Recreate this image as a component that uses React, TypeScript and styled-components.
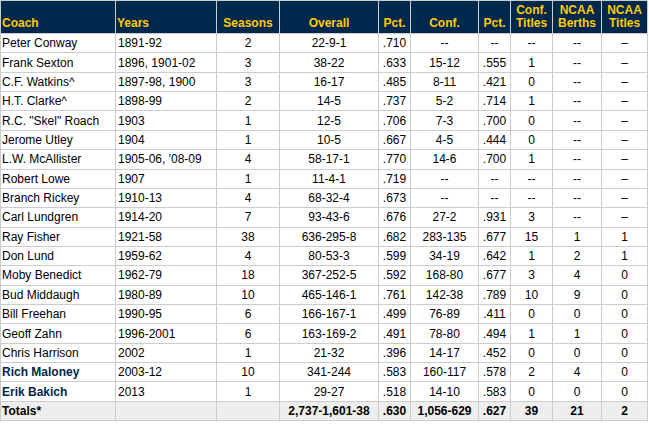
import React from "react";
import styled, { createGlobalStyle } from "styled-components";

const Global = createGlobalStyle`
  html, body { margin: 0; padding: 0; background: #fff; }
  body { font-family: "Liberation Sans", Arial, sans-serif; }
`;

const Table = styled.table`
  table-layout: fixed;
  width: 647px;
  border-collapse: collapse;
  font-family: "Liberation Sans", Arial, sans-serif;
  font-size: 12px;
  color: #000;
  border: 1px solid #ccc;
`;

const HeadCell = styled.th<{ $left?: boolean }>`
  background: #00274c;
  color: #ffcb05;
  font-weight: bold;
  font-size: 12px;
  line-height: 13px;
  text-align: ${(p) => (p.$left ? "left" : "center")};
  vertical-align: bottom;
  padding: 0 1px 3px 1px;
  border: 1px solid #ccc;
  height: 29px;
`;

const Row = styled.tr<{ $total?: boolean }>`
  height: ${(p) => (p.$total ? "19px" : "19.37px")};
  background: ${(p) => (p.$total ? "#eeeeee" : "#fff")};
  font-weight: ${(p) => (p.$total ? "bold" : "normal")};
`;

const Cell = styled.td<{ $left?: boolean; $pad?: number }>`
  border: 1px solid #ccc;
  padding: 0 1px 0 ${(p) => (p.$pad ?? 1)}px;
  text-align: ${(p) => (p.$left ? "left" : "center")};
  vertical-align: middle;
  white-space: nowrap;
  overflow: hidden;
  line-height: 14px;
`;

const CoachLink = styled.span`
  color: #00274c;
  font-weight: bold;
`;

type R = [string, string, string, string, string, string, string, string, string, string, boolean?];

const D = "--";
const T = "–";

const rows: R[] = [
  ["Peter Conway", "1891-92", "2", "22-9-1", ".710", D, D, D, D, T],
  ["Frank Sexton", "1896, 1901-02", "3", "38-22", ".633", "15-12", ".555", "1", D, T],
  ["C.F. Watkins^", "1897-98, 1900", "3", "16-17", ".485", "8-11", ".421", "0", D, T],
  ["H.T. Clarke^", "1898-99", "2", "14-5", ".737", "5-2", ".714", "1", D, T],
  ["R.C. \"Skel\" Roach", "1903", "1", "12-5", ".706", "7-3", ".700", "0", D, T],
  ["Jerome Utley", "1904", "1", "10-5", ".667", "4-5", ".444", "0", D, T],
  ["L.W. McAllister", "1905-06, '08-09", "4", "58-17-1", ".770", "14-6", ".700", "1", D, T],
  ["Robert Lowe", "1907", "1", "11-4-1", ".719", D, D, D, D, T],
  ["Branch Rickey", "1910-13", "4", "68-32-4", ".673", D, D, D, D, T],
  ["Carl Lundgren", "1914-20", "7", "93-43-6", ".676", "27-2", ".931", "3", D, T],
  ["Ray Fisher", "1921-58", "38", "636-295-8", ".682", "283-135", ".677", "15", "1", "1"],
  ["Don Lund", "1959-62", "4", "80-53-3", ".599", "34-19", ".642", "1", "2", "1"],
  ["Moby Benedict", "1962-79", "18", "367-252-5", ".592", "168-80", ".677", "3", "4", "0"],
  ["Bud Middaugh", "1980-89", "10", "465-146-1", ".761", "142-38", ".789", "10", "9", "0"],
  ["Bill Freehan", "1990-95", "6", "166-167-1", ".499", "76-89", ".411", "0", "0", "0"],
  ["Geoff Zahn", "1996-2001", "6", "163-169-2", ".491", "78-80", ".494", "1", "1", "0"],
  ["Chris Harrison", "2002", "1", "21-32", ".396", "14-17", ".452", "0", "0", "0"],
  ["Rich Maloney", "2003-12", "10", "341-244", ".583", "160-117", ".578", "2", "4", "0", true],
  ["Erik Bakich", "2013", "1", "29-27", ".518", "14-10", ".583", "0", "0", "0", true],
];

const widths = [115, 101, 63, 99, 32, 68, 32, 42, 49, 46];

export default function App() {
  return (
    <>
      <Global />
      <Table>
        <colgroup>
          {widths.map((w, i) => (
            <col key={i} style={{ width: w }} />
          ))}
        </colgroup>
        <thead>
          <tr>
            <HeadCell $left>Coach</HeadCell>
            <HeadCell $left>Years</HeadCell>
            <HeadCell>Seasons</HeadCell>
            <HeadCell>Overall</HeadCell>
            <HeadCell>Pct.</HeadCell>
            <HeadCell>Conf.</HeadCell>
            <HeadCell>Pct.</HeadCell>
            <HeadCell>Conf.<br />Titles</HeadCell>
            <HeadCell>NCAA<br />Berths</HeadCell>
            <HeadCell>NCAA<br />Titles</HeadCell>
          </tr>
        </thead>
        <tbody>
          {rows.map((r) => (
            <Row key={r[0]}>
              <Cell $left>{r[10] ? <CoachLink>{r[0]}</CoachLink> : r[0]}</Cell>
              <Cell $left $pad={2}>{r[1]}</Cell>
              {r.slice(2, 10).map((v, i) => (
                <Cell key={i}>{v}</Cell>
              ))}
            </Row>
          ))}
          <Row $total>
            <Cell $left>Totals*</Cell>
            <Cell $left $pad={2}></Cell>
            <Cell></Cell>
            <Cell>2,737-1,601-38</Cell>
            <Cell>.630</Cell>
            <Cell>1,056-629</Cell>
            <Cell>.627</Cell>
            <Cell>39</Cell>
            <Cell>21</Cell>
            <Cell>2</Cell>
          </Row>
        </tbody>
      </Table>
    </>
  );
}
